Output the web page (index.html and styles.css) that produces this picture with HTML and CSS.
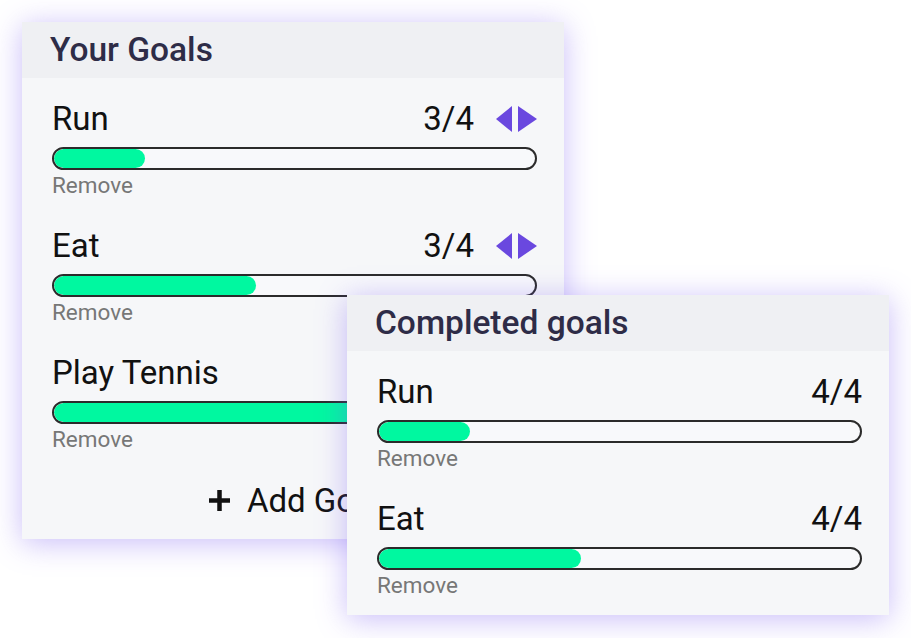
FILE: index.html
```html
<!DOCTYPE html>
<html lang="en">
<head>
    <meta charset="UTF-8">
    <meta name="viewport" content="width=device-width, initial-scale=1.0">
    <title>Goals</title>
    <link rel="stylesheet" href="styles.css">
</head>
<body>

<div class="board">
    <div class="card">
        <h2 class="card-title">Your Goals</h2>
        <div class="card-body">
            <div class="goal">
                <div class="goal-top">
                    <span class="goal-name">Run</span>
                    <span class="goal-count">3/4</span>
                    <span class="arrows">
                        <svg width="16" height="26" viewBox="0 0 16 26"><path d="M16 0 L16 26 L0 13 Z" fill="#6a48df"/></svg>
                        <svg width="19" height="26" viewBox="0 0 19 26"><path d="M0 0 L0 26 L19 13 Z" fill="#6a48df"/></svg>
                    </span>
                </div>
                <div class="bar"><div class="fill" style="width: 19%"></div></div>
                <a class="remove">Remove</a>
            </div>

            <div class="goal">
                <div class="goal-top">
                    <span class="goal-name">Eat</span>
                    <span class="goal-count">3/4</span>
                    <span class="arrows">
                        <svg width="16" height="26" viewBox="0 0 16 26"><path d="M16 0 L16 26 L0 13 Z" fill="#6a48df"/></svg>
                        <svg width="19" height="26" viewBox="0 0 19 26"><path d="M0 0 L0 26 L19 13 Z" fill="#6a48df"/></svg>
                    </span>
                </div>
                <div class="bar"><div class="fill" style="width: 42%"></div></div>
                <a class="remove">Remove</a>
            </div>

            <div class="goal">
                <div class="goal-top">
                    <span class="goal-name">Play Tennis</span>
                    <span class="goal-count">2/4</span>
                    <span class="arrows">
                        <svg width="16" height="26" viewBox="0 0 16 26"><path d="M16 0 L16 26 L0 13 Z" fill="#6a48df"/></svg>
                        <svg width="19" height="26" viewBox="0 0 19 26"><path d="M0 0 L0 26 L19 13 Z" fill="#6a48df"/></svg>
                    </span>
                </div>
                <div class="bar"><div class="fill" style="width: 80%"></div></div>
                <a class="remove">Remove</a>
            </div>

            <button class="add-btn">
                <svg width="23" height="23" viewBox="0 0 23 23"><path d="M11.5 1 V22 M1 11.5 H22" stroke="#111" stroke-width="4.5"/></svg>
                Add Goal
            </button>
        </div>
    </div>

    <!-- completed list sits on top of the first card -->
    <div class="card card-done">
        <h2 class="card-title">Completed goals</h2>
        <div class="card-body">
            <div class="goal">
                <div class="goal-top">
                    <span class="goal-name">Run</span>
                    <span class="goal-count">4/4</span>
                </div>
                <div class="bar"><div class="fill" style="width: 19%"></div></div>
                <a class="remove">Remove</a>
            </div>

            <div class="goal">
                <div class="goal-top">
                    <span class="goal-name">Eat</span>
                    <span class="goal-count">4/4</span>
                </div>
                <div class="bar"><div class="fill" style="width: 42%"></div></div>
                <a class="remove">Remove</a>
            </div>
        </div>
    </div>
</div>

</body>
</html>
```

FILE: styles.css
```css
body {
    margin: 0;
    background: #ffffff;
    font-family: Roboto, "Liberation Sans", sans-serif;
    color: #111;
}
.board {
    position: relative;
    height: 638px;
    box-sizing: border-box;
    padding: 22px;
}
.card {
    width: 542px;
    background: #f6f7f9;
    box-shadow: 0 4px 28px rgba(120, 90, 240, 0.4);
}
.card-title {
    margin: 0;
    height: 56px;
    padding-left: 28px;
    background: #eff0f3;
    color: #2e2c47;
    font-size: 33.5px;
    font-weight: 500;
    line-height: 56px;
}
.card-body {
    padding: 21px 27px 19px 30px;
}
.card-done {
    position: absolute;
    left: 347px;
    top: 295px;
}
.card-done .card-body {
    padding-bottom: 17px;
}
.goal + .goal {
    margin-top: 28px;
}
.goal-top {
    display: flex;
    align-items: center;
    height: 39px;
    font-size: 33px;
}
.goal-name {
    flex: 1;
}
.arrows {
    display: flex;
    gap: 6px;
    margin-left: 22px;
}
.arrows svg {
    display: block;
}
.bar {
    margin-top: 9px;
    height: 23px;
    box-sizing: border-box;
    border: 2px solid #2b2b2b;
    border-radius: 12px;
    background: #f8f9fb;
    overflow: hidden;
}
.fill {
    height: 100%;
    background: #00f8a0;
    border-radius: 12px;
}
.remove {
    display: block;
    margin-top: 2px;
    font-size: 22.5px;
    line-height: 26px;
    color: #777;
    cursor: pointer;
}
.add-btn {
    display: flex;
    align-items: center;
    justify-content: center;
    gap: 16px;
    width: 100%;
    margin-top: 29px;
    padding: 0;
    border: none;
    background: none;
    font-family: inherit;
    font-size: 33px;
    line-height: 39px;
    color: #111;
    cursor: pointer;
}
```
